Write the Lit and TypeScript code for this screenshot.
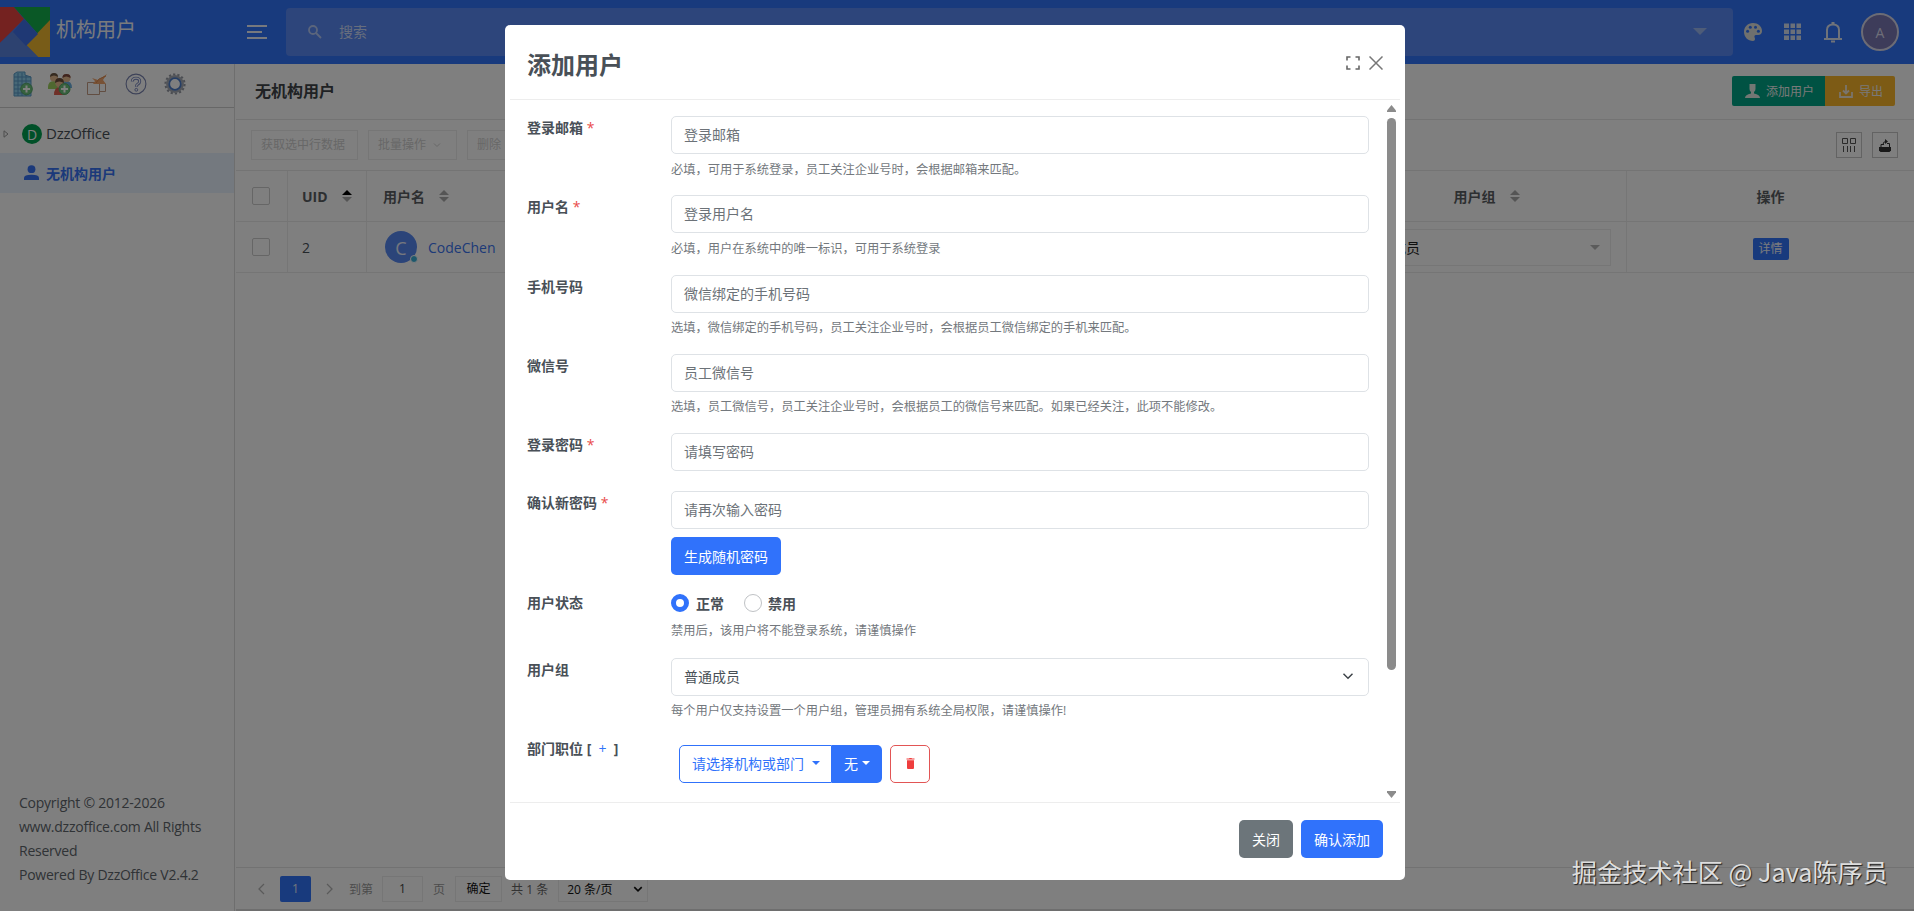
import { LitElement, html, css, svg, nothing, TemplateResult } from "lit";
import { customElement } from "lit/decorators.js";
import { classMap } from "lit/directives/class-map.js";

interface Field {
  label: string;
  required?: boolean;
  placeholder: string;
  help?: string;
}

const FIELDS: Field[] = [
  { label: "登录邮箱", required: true, placeholder: "登录邮箱", help: "必填，可用于系统登录，员工关注企业号时，会根据邮箱来匹配。" },
  { label: "用户名", required: true, placeholder: "登录用户名", help: "必填，用户在系统中的唯一标识，可用于系统登录" },
  { label: "手机号码", placeholder: "微信绑定的手机号码", help: "选填，微信绑定的手机号码，员工关注企业号时，会根据员工微信绑定的手机来匹配。" },
  { label: "微信号", placeholder: "员工微信号", help: "选填，员工微信号，员工关注企业号时，会根据员工的微信号来匹配。如果已经关注，此项不能修改。" },
  { label: "登录密码", required: true, placeholder: "请填写密码" },
];

const logo = svg`<svg class="logo" viewBox="0 0 50 50" width="50" height="50">
  <rect width="50" height="50" fill="#4a7cf0"/>
  <path d="M0 0H14L24 12L0 36Z" fill="#e94440"/>
  <path d="M14 0H50V14L38 27Z" fill="#14b04c"/>
  <path d="M50 13V50H38L26 38Z" fill="#f0b830"/>
  <path d="M0 36L13 24L38 50H0Z" fill="#5b85e0"/>
  <path d="M24 12L38 27L26 39L13 25Z" fill="#3f70e8"/>
</svg>`;

const building = svg`<svg width="22" height="26" viewBox="0 0 22 26">
  <path d="M2 25V3L5 1H13V4L19 6V25Z" fill="#8fd0ee" stroke="#5a9cc8"/>
  <path d="M2 6H19M2 10H19M2 14H19M2 18H19M2 22H19M6 2V25M10 2V25M14 4V25" stroke="#5a98c8" fill="none"/>
  <circle cx="14.500" cy="18" r="5.800" fill="#6cc27c" stroke="#58a868"/>
  <path d="M14.500 14.500V21.500M11 18H18" stroke="#fff" stroke-width="2"/>
</svg>`;

const people = svg`<svg width="26" height="24" viewBox="0 0 26 24">
  <path d="M1 15Q1 9 7 9Q11 9 12 13L10 17H1Z" fill="#9fd060"/>
  <path d="M14 13Q15 9 19 9Q25 9 25 16H16Z" fill="#6aaede"/>
  <circle cx="7" cy="5.500" r="4" fill="#e8bc90"/><path d="M3 5Q3 1 7 1Q11 1 11 5Q7 2 3 5Z" fill="#6a5440"/>
  <circle cx="19.500" cy="6" r="4" fill="#e8bc90"/><path d="M15.500 6Q15 2 19.500 2Q24 2 23.500 6Q19 3 15.500 6Z" fill="#80483c"/>
  <path d="M7 23Q7 15 13 15Q18 15 18 23Z" fill="#e06050"/>
  <circle cx="12.500" cy="11" r="4.300" fill="#e8bc90"/><path d="M8 11Q8 6 12.500 6Q17 6 17 11Q12 8 8 11Z" fill="#6a4c38"/>
  <circle cx="17.500" cy="17" r="5.500" fill="#6cc27c" stroke="#58a868"/>
  <path d="M17.500 13.500V20.500M14 17H21" stroke="#fff" stroke-width="2"/>
</svg>`;

const importIcon = svg`<svg width="22" height="23" viewBox="0 0 22 23">
  <path d="M1.500 9.500H13.500V21.500H1.500Z" fill="none" stroke="#c49c84"/>
  <path d="M13.500 18.500H19.500V11" fill="none" stroke="#c49c84"/>
  <path d="M21 1L17 7L20 11H7L9 8L6 5L12 7Z" fill="#f0a46c"/>
  <path d="M10 10L13 6L20 3" stroke="#dc8a50" fill="none"/>
</svg>`;

const help = svg`<svg width="22" height="22" viewBox="0 0 22 22" fill="none">
  <circle cx="11" cy="11" r="9.900" stroke="#7a84b0" stroke-width="1.100"/>
  <path d="M7.300 8.500Q7.300 5.200 11 5.200Q14.700 5.200 14.700 8.200Q14.700 10.200 12.600 11.300Q11.400 12 11.400 13.800" stroke="#7a88c0" stroke-width="3"/>
  <path d="M7.300 8.300Q7.300 5.200 11 5.200Q14.700 5.200 14.700 8.200Q14.700 10.200 12.600 11.300Q11.400 12 11.400 13.400" stroke="#fff" stroke-width="1.200"/>
  <circle cx="11.300" cy="16.800" r="1.400" stroke="#7a88c0"/>
</svg>`;

const gear = svg`<svg width="22" height="22" viewBox="0 0 22 22" fill="none">
  <circle cx="11" cy="11" r="9.500" stroke="#969aa4" stroke-width="2.200" stroke-dasharray="2.200 2.060"/>
  <circle cx="11" cy="11" r="7.600" stroke="#a6abb4" stroke-width="2.600"/>
  <circle cx="11" cy="11" r="5.800" stroke="#4c7cc8" stroke-width="1.800"/>
</svg>`;

const chevron = (w: number, color: string, sw: number) => svg`<svg width="${w}" height="${w}" viewBox="0 0 16 16" fill="none">
  <path d="M2 5L8 11L14 5" stroke="${color}" stroke-width="${sw}"/></svg>`;

@customElement("app-root")
export class AppRoot extends LitElement {
  static styles = css`
    :host {
      display: block;
      position: relative;
      height: 911px;
      overflow: hidden;
      font: 14px/21px "Open Sans", "Noto Sans CJK SC", sans-serif;
      color: #495057;
      background: #fff;
    }
    * { box-sizing: border-box; }
    svg { display: block; flex: none; }
    .page { display: flex; flex-direction: column; height: 911px; }
    .top { display: flex; align-items: center; height: 64px; background: #3074fa; color: #fff; flex: none; }
    .brand { display: flex; align-items: center; width: 247px; height: 64px; }
    .brand-name { font-size: 20px; line-height: 30px; margin: -4px 0 0 6px; color: #f4f6fb; }
    .search { display: flex; align-items: center; width: 1447px; height: 48px; margin: 0 0 1px 19px; padding: 0 26px 0 22px; border-radius: 4px; background: #5a8af6; color: #cfdcfa; flex: none; }
    .search-text { flex: 1; margin-left: 17px; }
    .tri { width: 0; height: 0; border: 7px solid transparent; border-top-color: #9db8f0; border-bottom: 0; }
    .top-icons { display: flex; align-items: center; margin-left: 10px; }
    .avatar { width: 38px; height: 38px; margin-left: 18px; border: 2px solid #d8d8ea; border-radius: 50%; background: #7a78b4; text-align: center; line-height: 36px; color: #dcdcf0; font-size: 14px; }
    .body { display: flex; flex: 1; min-height: 0; }
    .side { display: flex; flex-direction: column; width: 235px; border-right: 1px solid #dcdcdc; flex: none; }
    .side-tools { display: flex; align-items: center; height: 44px; border-bottom: 1px solid #cfcfcf; padding: 0 0 3px 12px; }
    .tool { display: flex; width: 39px; }
    .tool:first-child { width: 35px; }
    .tree { padding-top: 6px; flex: 1; }
    .node { display: flex; align-items: center; height: 39px; padding-left: 3px; }
    .node.active { height: 40px; background: #e9f2ff; color: #3672f4; font-weight: 700; padding-left: 24px; }
    .node-name { font-size: 15px; letter-spacing: -0.25px; margin-left: 4px; }
    .node.active .node-name { font-size: 14px; letter-spacing: 0; margin-left: 7px; }
    .badge { width: 20px; height: 20px; margin-left: 13px; border-radius: 50%; background: #00a050; color: #fff; text-align: center; line-height: 21px; }
    .copy { padding: 0 19px 24px; line-height: 24px; color: #60666c; letter-spacing: -0.24px; white-space: pre; }
    .main { display: flex; flex-direction: column; flex: 1; min-width: 0; margin-left: 1px; }
    .main-head { display: flex; align-items: center; height: 56px; border-bottom: 1px solid #e6e6e6; padding: 0 19px 1px 19px; }
    .main-title { flex: 1; font-size: 16px; font-weight: 700; color: #404448; }
    .btn-add, .btn-export { display: flex; align-items: center; height: 30px; font-size: 12px; color: #f2f2f2; }
    .btn-add { width: 93px; background: #00a586; gap: 6px; border-radius: 2px 0 0 2px; padding-left: 13px; }
    .btn-export { width: 70px; background: #fbb62b; gap: 6px; border-radius: 0 2px 2px 0; padding-left: 14px; }
    .bar { display: flex; align-items: center; height: 51px; border-bottom: 1px solid #e8e8e8; padding: 0 16px 0 15px; gap: 10px; }
    .ghost { display: flex; align-items: center; gap: 7px; height: 30px; border: 1px solid #ededed; font-size: 12px; color: #cfcfcf; margin-top: -1px; padding-left: 9px; }
    .g1 { width: 107px; } .g2 { width: 89px; } .g3 { width: 52px; }
    .fill { flex: 1; }
    .sq { display: flex; align-items: center; justify-content: center; width: 26px; height: 26px; border: 1px solid #c6c6c6; }
    .tr { display: grid; grid-template-columns: 52px 79px 980px 280px 1fr; height: 51px; border-bottom: 1px solid #ebebeb; font-size: 14px; }
    .td { display: flex; align-items: center; border-right: 1px solid #ededed; padding: 0 14px 0 16px; }
    .td:nth-child(2) { padding-left: 14px; }
    .td:last-child { border: 0; justify-content: center; padding: 0; }
    .th .td { font-weight: 700; color: #5a5e62; }
    .cb { width: 18px; height: 18px; border: 1px solid #ccc; border-radius: 2px; flex: none; }
    .sort { margin-left: 14px; }
    .group.td { justify-content: center; padding: 0 14px; }
    .sel { display: flex; align-items: center; justify-content: space-between; width: 257px; height: 37px; border: 1px solid #ececec; padding: 0 10px 0 9px; color: #222; flex: none; margin-left: -8px; }
    .sel .tri { border-width: 5px 5px 0; border-top-color: #b6b6b6; }
    .user-pic { position: relative; width: 32px; height: 32px; border-radius: 50%; background: #5688f2; color: #e8eefc; font-size: 18px; line-height: 34px; text-align: center; margin: 0 11px 0 2px; }
    .dot { position: absolute; right: -1px; bottom: 0; width: 8px; height: 8px; border: 1px solid #fff; border-radius: 50%; background: #38b0d8; }
    .link { color: #3a74f0; }
    .detail { width: 36px; height: 22px; border-radius: 2px; background: #3074fa; color: #f4f6fb; font-size: 12px; line-height: 22px; text-align: center; margin-top: 3px; }
    .pager { display: flex; align-items: center; height: 44px; border-top: 1px solid #e4e4e4; border-bottom: 2px solid #ddd; margin-top: auto; padding: 1px 0 0 20px; font-size: 12px; color: #999; }
    .pg { width: 31px; height: 26px; margin: 0 12px; background: #3074fa; border-radius: 2px; color: #e4ecfc; line-height: 26px; text-align: center; }
    .pg-to { margin-left: 14px; }
    .pg-in { width: 41px; height: 26px; margin: 0 10px 0 9px; border: 1px solid #ececec; text-align: center; line-height: 24px; color: #444; }
    .pg-ok { width: 47px; height: 26px; margin: 0 9px 0 10px; border: 1px solid #ececec; text-align: center; line-height: 24px; color: #111; }
    .pg-sel { display: flex; align-items: center; justify-content: space-between; width: 90px; height: 26px; margin-left: 10px; border: 1px solid #ececec; padding: 0 4px 0 8px; color: #111; }
    .dark { color: #666; }

    .overlay { position: absolute; inset: 0; display: flex; justify-content: center; align-items: flex-start; padding: 25px 4px 0 0; background: rgba(0, 0, 0, 0.5); }
    .modal { display: flex; flex-direction: column; width: 900px; height: 855px; background: #fff; border-radius: 5px; padding: 0 5px; color: #495057; }
    .m-head { display: flex; align-items: center; height: 75px; border-bottom: 1px solid #ededed; padding: 6px 17px 0; }
    .m-title { flex: 1; font-size: 24px; line-height: 36px; font-weight: 700; }
    .m-icons { display: flex; gap: 9px; margin-top: -5px; }
    .m-body { display: flex; height: 703px; border-bottom: 1px solid #ededed; }
    .form { flex: 1; padding: 16.200px 18px 0 17px; }
    .row { display: flex; height: 79.200px; }
    .row.short { height: 58.400px; }
    .row.pass { height: 99.600px; }
    .row.state { height: 67px; }
    .row.grp { height: 87px; }
    .label { width: 144px; font-weight: 700; padding-top: 1px; flex: none; white-space: pre; }
    .label.up { margin-top: -8px; }
    .star { color: #e94b4b; font-weight: 400; }
    .plus { color: #3074fa; font-weight: 400; }
    .ctl { flex: 1; min-width: 0; }
    .input { display: flex; align-items: center; justify-content: space-between; height: 38px; border: 1px solid #dee2e6; border-radius: 5px; padding: 0 14px 1px 12px; color: #6c7278; }
    .input.value { color: #495057; }
    .help { font-size: 12.250px; line-height: 18px; color: #73787d; margin-top: 6.500px; white-space: nowrap; }
    .btn { display: inline-flex; align-items: center; justify-content: center; height: 38px; border-radius: 5px; background: #3072fb; color: #fff; }
    .gen { width: 110px; margin-top: 8px; }
    .radios { display: flex; align-items: center; height: 23px; font-weight: 700; margin-top: 1px; }
    .radio { width: 18px; height: 18px; border: 1px solid #bfc2c5; border-radius: 50%; margin-right: 6px; margin-left: 20px; }
    .radio.on { border: 5px solid #3072fb; margin-left: 0; margin-right: 7px; }
    .state .help { margin-top: 7.500px; }
    .dept { display: flex; padding-left: 8px; }
    .pick { display: flex; align-items: center; gap: 8px; width: 153px; height: 38px; padding-left: 12px; border: 1px solid #3072fb; border-radius: 5px 0 0 5px; color: #3072fb; }
    .caret { width: 0; height: 0; border: 4px solid transparent; border-top-color: currentColor; border-bottom: 0; margin-bottom: 2px; }
    .none { width: 50px; gap: 4px; border-radius: 0 5px 5px 0; }
    .del { width: 40px; height: 38px; margin-left: 8px; display: flex; align-items: center; justify-content: center; border: 1px solid #e25555; border-radius: 5px; }
    .scroll { display: flex; flex-direction: column; align-items: center; width: 13px; padding: 5px 4px 4px 0; }
    .thumb { width: 9px; height: 552px; border-radius: 5px; background: #8b8b8b; margin: 6px 0 auto; flex: none; }
    .m-foot { display: flex; justify-content: flex-end; gap: 8px; padding: 17px 17px 0; }
    .close { width: 54px; background: #6c757a; }
    .ok { width: 82px; }
    .mark { position: absolute; right: 26px; bottom: 20px; font: 25.200px/40px "Noto Sans CJK SC", sans-serif; color: #dedede; text-shadow: 1px 1px 1px #222; white-space: nowrap; }
  `;

  private sort(active = false): TemplateResult {
    return html`<svg class="sort" width="10" height="12" viewBox="0 0 10 12">
      <path d="M0 5L5 0L10 5Z" fill=${active ? "#000" : "#aaa"}></path>
      <path d="M0 7L5 12L10 7Z" fill="#aaa"></path>
    </svg>`;
  }

  private label(text: string, required?: boolean): TemplateResult {
    return html`<div class="label">${text}${required ? html`<span class="star"> *</span>` : nothing}</div>`;
  }

  private field(f: Field): TemplateResult {
    return html`<div class=${classMap({ row: true, short: !f.help })}>
      ${this.label(f.label, f.required)}
      <div class="ctl">
        <div class="input">${f.placeholder}</div>
        ${f.help ? html`<div class="help">${f.help}</div>` : nothing}
      </div>
    </div>`;
  }

  private header(): TemplateResult {
    return html`<header class="top">
      <div class="brand">${logo}<span class="brand-name">机构用户</span></div>
      <svg width="20" height="14" viewBox="0 0 20 14"><path d="M0 1H20M0 7H15M0 13H20" stroke="#eef2fc" stroke-width="2"></path></svg>
      <div class="search">
        <svg width="14" height="14" viewBox="0 0 14 14" fill="none" stroke="#b6cbf8" stroke-width="1.800"><circle cx="5" cy="5" r="4"></circle><path d="M8 8L13 13"></path></svg>
        <span class="search-text">搜索</span><i class="tri"></i>
      </div>
      <div class="top-icons">
        <svg width="20" height="20" viewBox="0 0 20 20"><path d="M10 1C4.500 1 1 5 1 10S5 19 10 19C11.200 19 12 18.200 12 17C12 15.500 11.200 15.300 11.500 14C11.800 12.800 13 13 15 13C17.500 13 19 11.500 19 9C19 4.500 15 1 10 1Z" fill="#dfe1dc"></path><g fill="#3074fa"><circle cx="4.600" cy="9.200" r="1.500"></circle><circle cx="7.300" cy="5.200" r="1.500"></circle><circle cx="12.500" cy="5.200" r="1.500"></circle><circle cx="15.400" cy="9.200" r="1.500"></circle></g></svg>
        <svg width="60" height="18" viewBox="-21 0 60 18"><path d="M0 .5H5V5H0ZM6.500 .5H11V5H6.500ZM12.500 .5H17V5H12.500ZM0 6.500H5V11H0ZM6.500 6.500H11V11H6.500ZM12.500 6.500H17V11H12.500ZM0 12.500H5V17H0ZM6.500 12.500H11V17H6.500ZM12.500 12.500H17V17H12.500Z" fill="#d6e0f2"></path></svg>
        <svg width="20" height="22" viewBox="0 0 20 22"><path d="M1 18H19M4 18V9Q4 3.500 10 3.500Q16 3.500 16 9V18" fill="none" stroke="#dfe6f4" stroke-width="2"></path><path d="M8.500 1H11.500V4H8.500ZM8 19.500H12V21.500H8Z" fill="#dfe6f4"></path></svg>
        <div class="avatar">A</div>
      </div>
    </header>`;
  }

  private sidebar(): TemplateResult {
    return html`<aside class="side">
      <div class="side-tools">
        ${[building, people, importIcon, help, gear].map((icon) => html`<div class="tool">${icon}</div>`)}
      </div>
      <div class="tree">
        <div class="node">
          <svg width="6" height="8" viewBox="0 0 6 8"><path d="M1 .8L5 4L1 7.200Z" fill="none" stroke="#999"></path></svg>
          <div class="badge">D</div><span class="node-name">DzzOffice</span>
        </div>
        <div class="node active">
          <svg width="15" height="16" viewBox="0 0 15 16"><circle cx="7.500" cy="4.200" r="3.900" fill="#3672f4"></circle><path d="M0 15V13Q0 9.800 7.500 9.800Q15 9.800 15 13V15Z" fill="#3672f4"></path></svg>
          <span class="node-name">无机构用户</span>
        </div>
      </div>
      <div class="copy">Copyright © 2012-2026
www.dzzoffice.com All Rights
Reserved
Powered By DzzOffice V2.4.2</div>
    </aside>`;
  }

  private content(): TemplateResult {
    return html`<main class="main">
      <div class="main-head">
        <span class="main-title">无机构用户</span>
        <div class="btn-add"><svg width="15" height="14" viewBox="0 0 15 14"><path d="M4.500 0H10.500V5Q10.500 7 9 8V9.500Q15 10.500 15 14H0Q0 10.500 6 9.500V8Q4.500 7 4.500 5Z" fill="#e4eee8"></path></svg>添加用户</div>
        <div class="btn-export"><svg width="14" height="13" viewBox="0 0 14 13" fill="none" stroke="#f4ead8" stroke-width="1.800"><path d="M1 7V12H13V7M7 0V8M4 5.500L7 8.500L10 5.500"></path></svg>导出</div>
      </div>
      <div class="bar">
        <div class="ghost g1">获取选中行数据</div>
        <div class="ghost g2">批量操作 ${chevron(8, "#cfcfcf", 2)}</div>
        <div class="ghost g3">删除</div>
        <div class="fill"></div>
        <div class="sq"><svg width="14" height="14" viewBox="0 0 14 14" fill="none" stroke="#555"><path d="M.5 .5H5.500V5.500H.5ZM8.500 .5H13.500V5.500H8.500ZM1.500 8V14M5.500 8V14M8.500 8V14M12.500 8V14"></path></svg></div>
        <div class="sq"><svg width="12" height="13" viewBox="0 0 12 13"><path d="M0 8H12V11.500L10.500 13H1.500L0 11.500Z" fill="#333"></path><path d="M2 8V5.500H5M10.500 8V4.500H8M4 5.500Q4 2.500 7 2.500" fill="none" stroke="#333"></path><path d="M6 0L9 2.500L6 5Z" fill="#333"></path></svg></div>
      </div>
      <div class="tr th">
        <div class="td"><i class="cb"></i></div>
        <div class="td">UID ${this.sort(true)}</div>
        <div class="td">用户名 ${this.sort()}</div>
        <div class="td group">用户组 ${this.sort()}</div>
        <div class="td">操作</div>
      </div>
      <div class="tr">
        <div class="td"><i class="cb"></i></div>
        <div class="td">2</div>
        <div class="td"><div class="user-pic">C<i class="dot"></i></div><span class="link">CodeChen</span></div>
        <div class="td group"><div class="sel">普通成员<i class="tri"></i></div></div>
        <div class="td"><div class="detail">详情</div></div>
      </div>
      <div class="pager">
        <svg width="12" height="12" viewBox="0 0 12 12"><path d="M8 1L3 6L8 11" fill="none" stroke="#b5b5b5" stroke-width="1.300"></path></svg>
        <div class="pg">1</div>
        <svg width="12" height="12" viewBox="0 0 12 12"><path d="M4 1L9 6L4 11" fill="none" stroke="#b5b5b5" stroke-width="1.300"></path></svg>
        <span class="pg-to">到第</span>
        <div class="pg-in">1</div><span>页</span>
        <div class="pg-ok">确定</div><span class="dark">共 1 条</span>
        <div class="pg-sel">20 条/页 ${chevron(10, "#111", 2.6)}</div>
      </div>
    </main>`;
  }

  private modal(): TemplateResult {
    return html`<section class="modal">
      <div class="m-head">
        <span class="m-title">添加用户</span>
        <div class="m-icons">
          <svg width="14" height="14" viewBox="0 0 14 14" fill="none" stroke="#666" stroke-width="1.600"><path d="M1 4.500V1H4.500M9.500 1H13V4.500M13 9.500V13H9.500M4.500 13H1V9.500"></path></svg>
          <svg width="14" height="14" viewBox="0 0 14 14" stroke="#777" stroke-width="1.500"><path d="M.5 .5L13.500 13.500M13.500 .5L.5 13.500"></path></svg>
        </div>
      </div>
      <div class="m-body">
        <div class="form">
          ${FIELDS.map((f) => this.field(f))}
          <div class="row pass">${this.label("确认新密码", true)}
            <div class="ctl"><div class="input">请再次输入密码</div><div class="btn gen">生成随机密码</div></div>
          </div>
          <div class="row state">${this.label("用户状态")}
            <div class="ctl">
              <div class="radios"><i class="radio on"></i>正常<i class="radio"></i>禁用</div>
              <div class="help">禁用后，该用户将不能登录系统，请谨慎操作</div>
            </div>
          </div>
          <div class="row grp">${this.label("用户组")}
            <div class="ctl">
              <div class="input value">普通成员${chevron(12, "#3c4247", 1.9)}</div>
              <div class="help">每个用户仅支持设置一个用户组，管理员拥有系统全局权限，请谨慎操作!</div>
            </div>
          </div>
          <div class="row"><div class="label up">部门职位 [ <span class="plus"> + </span> ]</div>
            <div class="ctl dept">
              <div class="pick">请选择机构或部门<i class="caret"></i></div>
              <div class="btn none">无<i class="caret"></i></div>
              <div class="del"><svg width="9" height="11" viewBox="0 0 9 11"><path d="M.5 .5H3L3.500 0H5.500L6 .5H8.500V1.500H.5ZM1 2.200H8V10Q8 11 7 11H2Q1 11 1 10Z" fill="#ef3e3e"></path></svg></div>
            </div>
          </div>
        </div>
        <div class="scroll">
          <svg width="9" height="7" viewBox="0 0 9 7"><path d="M4.500 0L9 5.500V7H0V5.500Z" fill="#8b8b8b"></path></svg>
          <div class="thumb"></div>
          <svg width="9" height="7" viewBox="0 0 9 7"><path d="M4.500 7L9 1.500V0H0V1.500Z" fill="#8b8b8b"></path></svg>
        </div>
      </div>
      <div class="m-foot"><div class="btn close">关闭</div><div class="btn ok">确认添加</div></div>
    </section>`;
  }

  render() {
    return html`<div class="page">${this.header()}
        <div class="body">${this.sidebar()}${this.content()}</div>
      </div>
      <div class="overlay">${this.modal()}</div>
      <div class="mark">掘金技术社区 @ Java陈序员</div>`;
  }
}
